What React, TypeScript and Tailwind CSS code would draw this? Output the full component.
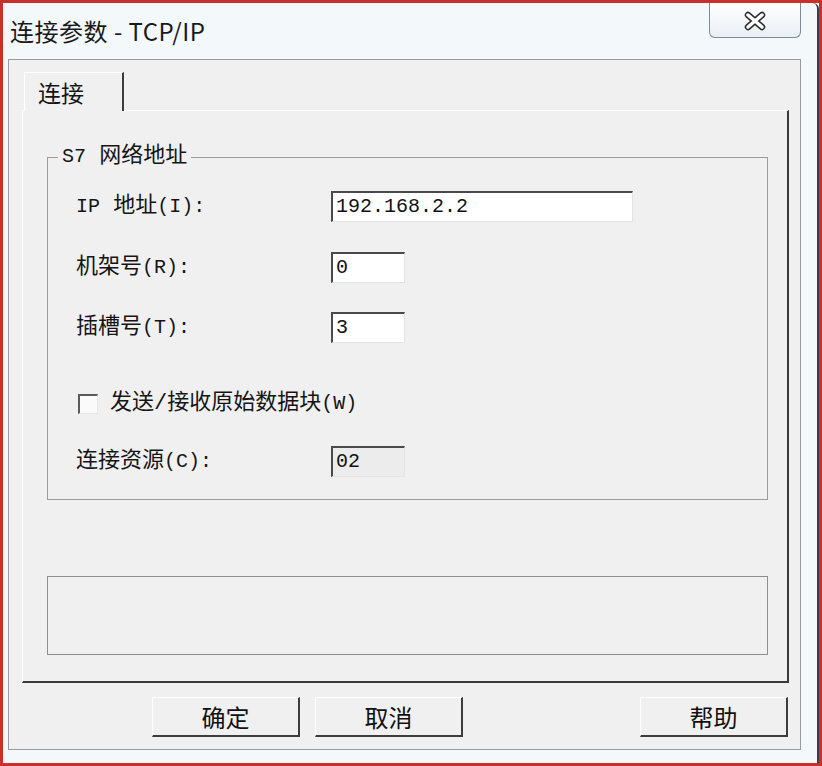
import type { ReactNode } from 'react'
import clsx from 'clsx'

const Lat = ({ children }: { children: ReactNode }) => (
  <span className="font-['Liberation_Mono',monospace] text-[20px]">{children}</span>
)

const Field = ({ value, wide, disabled }: { value: string; wide?: boolean; disabled?: boolean }) => (
  <div
    className={clsx(
      "flex h-[31px] items-center border-t-2 border-l-2 border-r border-b border-t-[#4a4a4a] border-l-[#4a4a4a] border-r-[#e4e4e4] border-b-[#e4e4e4] pl-[3px] font-['Liberation_Mono',monospace] text-[20px] text-[#111]",
      wide ? 'w-[302px]' : 'w-[74px]',
      disabled ? 'bg-[#ececec]' : 'bg-white',
    )}
  >
    {value}
  </div>
)

const Row = ({ label, className, children }: { label: ReactNode; className: string; children: ReactNode }) => (
  <div className={clsx('flex h-[31px] items-center', className)}>
    <div className="w-[255px] text-[22px] leading-none">{label}</div>
    {children}
  </div>
)

const Button = ({ label, className }: { label: string; className?: string }) => (
  <button
    className={clsx(
      "flex h-[40px] w-[148px] items-center justify-center border-t border-l border-r-2 border-b-2 border-t-[#fdfdfd] border-l-[#fdfdfd] border-r-[#3c3c3c] border-b-[#3c3c3c] bg-[#f0f0f0] font-['Noto_Sans_CJK_SC',sans-serif] text-[24px] leading-none text-[#111]",
      className,
    )}
  >
    {label}
  </button>
)

export default function App() {
  return (
    <div className="h-[766px] w-[822px] border-[3px] border-[#c8302c] bg-[#f3f8fb] font-['Liberation_Mono','Noto_Sans_CJK_SC',monospace] text-[#151515]">
      <div className="flex h-full flex-col rounded-tr-[6px] border-r-2 border-r-[#3d3d4a] pl-[5px] pr-[16px]">
        {/* title bar */}
        <div className="flex h-[56px] items-start justify-between">
          <div className="mt-[11px] ml-[2px] font-['Noto_Sans_CJK_SC',sans-serif] text-[24px] leading-[34px] tracking-[0.5px] text-[#1a1a1a]">
            连接参数 - TCP/IP
          </div>
          <div className="flex h-[35px] w-[92px] items-center justify-center rounded-b-[6px] border border-t-0 border-[#7d8a98] bg-gradient-to-b from-[#ffffff] to-[#e9eff4]">
            <svg width="26" height="20" viewBox="0 0 26 20" className="mt-[1px]">
              <path d="M6 4 L20 16 M20 4 L6 16" stroke="#2b2b2b" strokeWidth="6.5" strokeLinecap="round" fill="none" />
              <path d="M6 4 L20 16 M20 4 L6 16" stroke="#ffffff" strokeWidth="3.5" strokeLinecap="round" fill="none" />
            </svg>
          </div>
        </div>

        {/* client */}
        <div className="flex h-[691px] flex-col border border-[#9a9a9a] bg-[#f0f0f0] pl-[13px] pr-[11px] pt-[12px]">
          <div className="flex h-[38px]">
            <div className="relative z-10 -mb-px ml-[2px] flex w-[100px] items-center border-t border-l border-r-2 border-t-white border-l-white border-r-[#3c3c3c] bg-[#f0f0f0] pl-[13px] font-['Noto_Sans_CJK_SC',sans-serif] text-[23px]">
              连接
            </div>
          </div>
          <div className="flex h-[573px] flex-col border-t border-l border-r-2 border-b-2 border-t-white border-l-white border-r-[#3a3a3a] border-b-[#3a3a3a] pl-[24px] pr-[19px] pt-[33px]">
            <fieldset className="border border-[#9c9c9c] pb-[22px] pl-[28px]">
              <legend className="-ml-[18px] px-[4px] text-[22px] leading-[26px]">
                <Lat>S7</Lat> 网络地址
              </legend>
              <Row className="mt-[21px]" label={<><Lat>IP</Lat> 地址<Lat>(I):</Lat></>}>
                <Field value="192.168.2.2" wide />
              </Row>
              <Row className="mt-[30px]" label={<>机架号<Lat>(R):</Lat></>}>
                <Field value="0" />
              </Row>
              <Row className="mt-[29px]" label={<>插槽号<Lat>(T):</Lat></>}>
                <Field value="3" />
              </Row>
              <div className="mt-[45px] flex h-[31px] items-center">
                <div className="ml-[2px] h-[20px] w-[20px] border-t-2 border-l-2 border-r border-b border-t-[#5a5a5a] border-l-[#5a5a5a] border-r-[#e6e6e6] border-b-[#e6e6e6] bg-[#fafafa]" />
                <div className="ml-[12px] text-[22px] leading-none">
                  发送/接收原始数据块<Lat>(W)</Lat>
                </div>
              </div>
              <Row className="mt-[27px]" label={<>连接资源<Lat>(C):</Lat></>}>
                <Field value="02" disabled />
              </Row>
            </fieldset>
            <div className="mt-[76px] h-[79px] border border-[#8e8e8e]" />
          </div>
          <div className="mt-[14px] flex">
            <Button label="确定" className="ml-[130px]" />
            <Button label="取消" className="ml-[15px]" />
            <Button label="帮助" className="ml-auto mr-[1px]" />
          </div>
        </div>
      </div>
    </div>
  )
}
